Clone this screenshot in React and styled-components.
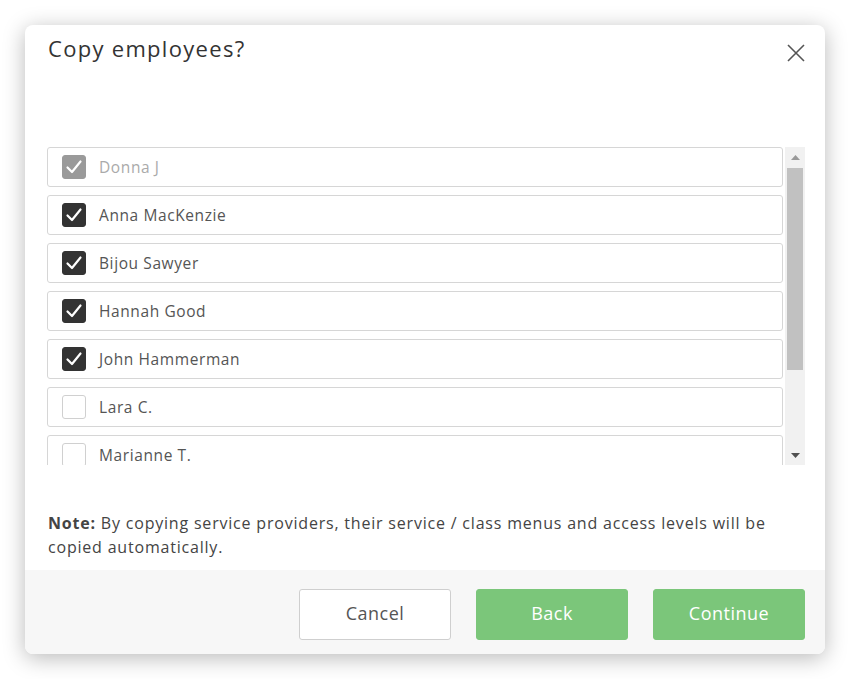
import React, { useState } from "react";
import styled, { createGlobalStyle } from "styled-components";

const GlobalStyle = createGlobalStyle`
  html, body {
    margin: 0;
    padding: 0;
    background: #ffffff;
    font-family: "Open Sans", "Lato", sans-serif;
  }
`;

const Page = styled.div`
  width: 850px;
  height: 679px;
  padding: 25px;
  box-sizing: border-box;
`;

const Dialog = styled.div`
  width: 800px;
  height: 629px;
  background: #fff;
  border-radius: 8px;
  box-shadow: 0 4px 22px rgba(0, 0, 0, 0.28);
  display: flex;
  flex-direction: column;
  overflow: hidden;
`;

const Header = styled.div`
  display: flex;
  justify-content: space-between;
  align-items: flex-start;
  padding: 8px 18px 0 23px;
  height: 112px;
  box-sizing: border-box;
`;

const Title = styled.h2`
  margin: 0;
  font-size: 22px;
  font-weight: 400;
  color: #333;
  letter-spacing: 1.3px;
`;

const CloseButton = styled.button`
  border: none;
  background: transparent;
  padding: 0;
  margin-top: 10px;
  width: 22px;
  height: 22px;
  cursor: pointer;
`;

const ListArea = styled.div`
  display: flex;
  margin: 10px 20px 0 22px;
  height: 318px;
`;

const List = styled.div`
  flex: 1;
  overflow: hidden;
  display: flex;
  flex-direction: column;
  gap: 8px;
  padding-right: 2px;
`;

const Row = styled.label`
  flex: 0 0 auto;
  height: 40px;
  box-sizing: border-box;
  border: 1px solid #d6d6d6;
  border-radius: 3px;
  display: flex;
  align-items: center;
  padding-left: 14px;
  gap: 13px;
  font-size: 15.5px;
  letter-spacing: 0.6px;
  color: ${({ disabled }) => (disabled ? "#aaa" : "#555")};
  cursor: ${({ disabled }) => (disabled ? "default" : "pointer")};
`;

const Box = styled.span`
  width: 24px;
  height: 24px;
  box-sizing: border-box;
  border-radius: 3px;
  display: flex;
  align-items: center;
  justify-content: center;
  background: ${({ checked, disabled }) =>
    disabled ? "#9a9a9a" : checked ? "#333" : "#fff"};
  border: 1px solid
    ${({ checked, disabled }) =>
      disabled ? "#9a9a9a" : checked ? "#333" : "#d0d0d0"};
`;

const Scrollbar = styled.div`
  width: 20px;
  background: #f1f1f1;
  display: flex;
  flex-direction: column;
  align-items: center;
`;

const Arrow = styled.div`
  height: 20px;
  display: flex;
  align-items: center;
  justify-content: center;
`;

const Thumb = styled.div`
  width: 16px;
  height: 202px;
  background: #c1c1c1;
  margin-top: 1px;
`;

const Spacer = styled.div`
  flex: 1;
`;

const Note = styled.p`
  margin: 46px 22px 0 23px;
  font-size: 16px;
  line-height: 24px;
  letter-spacing: 0.8px;
  color: #444;

  & strong {
    font-weight: 700;
  }
`;

const Footer = styled.div`
  margin-top: auto;
  height: 84px;
  background: #f7f7f7;
  display: flex;
  justify-content: flex-end;
  align-items: flex-start;
  gap: 25px;
  padding: 19px 20px 0 0;
  box-sizing: border-box;
`;

const Button = styled.button`
  width: 152px;
  height: 51px;
  padding: 0 0 4px;
  border-radius: 3px;
  font-family: inherit;
  font-size: 18px;
  letter-spacing: 0.5px;
  cursor: pointer;
  border: 1px solid ${({ primary }) => (primary ? "#7bc67a" : "#cfcfcf")};
  background: ${({ primary }) => (primary ? "#7bc67a" : "#fff")};
  color: ${({ primary }) => (primary ? "#fff" : "#555")};
`;

const employees = [
  { name: "Donna J", checked: true, disabled: true },
  { name: "Anna MacKenzie", checked: true },
  { name: "Bijou Sawyer", checked: true },
  { name: "Hannah Good", checked: true },
  { name: "John Hammerman", checked: true },
  { name: "Lara C.", checked: false },
  { name: "Marianne T.", checked: false },
  { name: "Peter W.", checked: false },
];

const Check = () => (
  <svg width="18" height="18" viewBox="0 0 18 18">
    <path
      d="M2.5 9.5 L7 14 L15.5 3.5"
      fill="none"
      stroke="#fff"
      strokeWidth="2.2"
      strokeLinecap="round"
      strokeLinejoin="round"
    />
  </svg>
);

export default function App() {
  const [list, setList] = useState(employees);

  const toggle = (i) =>
    setList((prev) =>
      prev.map((e, j) =>
        j === i && !e.disabled ? { ...e, checked: !e.checked } : e
      )
    );

  return (
    <Page>
      <GlobalStyle />
      <Dialog>
        <Header>
          <Title>Copy employees?</Title>
          <CloseButton aria-label="Close">
            <svg width="20" height="20" viewBox="0 0 20 20">
              <path
                d="M2 2 L18 18 M18 2 L2 18"
                stroke="#555"
                strokeWidth="1.6"
                fill="none"
              />
            </svg>
          </CloseButton>
        </Header>

        <ListArea>
          <List>
            {list.map((e, i) => (
              <Row key={e.name} disabled={e.disabled} onClick={() => toggle(i)}>
                <Box checked={e.checked} disabled={e.disabled}>
                  {e.checked && <Check />}
                </Box>
                {e.name}
              </Row>
            ))}
          </List>
          <Scrollbar>
            <Arrow>
              <svg width="9" height="5" viewBox="0 0 9 5">
                <path d="M0 5 L4.5 0 L9 5 Z" fill="#999" />
              </svg>
            </Arrow>
            <Thumb />
            <Spacer />
            <Arrow>
              <svg width="9" height="5" viewBox="0 0 9 5">
                <path d="M0 0 L4.5 5 L9 0 Z" fill="#505050" />
              </svg>
            </Arrow>
          </Scrollbar>
        </ListArea>

        <Note>
          <strong>Note:</strong> By copying service providers, their service /
          class menus and access levels will be copied automatically.
        </Note>

        <Footer>
          <Button>Cancel</Button>
          <Button primary>Back</Button>
          <Button primary>Continue</Button>
        </Footer>
      </Dialog>
    </Page>
  );
}
